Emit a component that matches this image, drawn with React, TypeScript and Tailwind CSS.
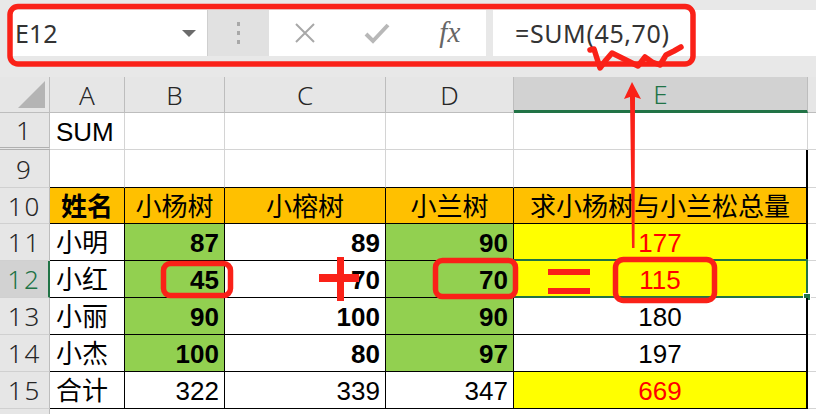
import React from 'react'

// --- Excel style demo: SUM(45,70) ---
type Cell = {
  v?: string
  bg?: string
  align?: 'l' | 'c' | 'r'
  bold?: boolean
  red?: boolean
}

const G = 'bg-[#92d050]'
const Y = 'bg-[#ffff00]'
const O = 'bg-[#ffc000]'

const rows: { no: string; h: string; table: boolean; cells: Cell[] }[] = [
  { no: '1', h: 'h-[37px]', table: false, cells: [{ v: 'SUM', align: 'l' }, {}, {}, {}, {}] },
  { no: '9', h: 'h-[38px]', table: false, cells: [{}, {}, {}, {}, {}] },
  {
    no: '10', h: 'h-[36px]', table: true,
    cells: [
      { v: '姓名', bg: O, align: 'c', bold: true },
      { v: '小杨树', bg: O, align: 'c' },
      { v: '小榕树', bg: O, align: 'c' },
      { v: '小兰树', bg: O, align: 'c' },
      { v: '求小杨树与小兰松总量', bg: O, align: 'c' },
    ],
  },
  {
    no: '11', h: 'h-[37px]', table: true,
    cells: [
      { v: '小明', align: 'l' },
      { v: '87', bg: G, align: 'r', bold: true },
      { v: '89', align: 'r', bold: true },
      { v: '90', bg: G, align: 'r', bold: true },
      { v: '177', bg: Y, align: 'c', red: true },
    ],
  },
  {
    no: '12', h: 'h-[37px]', table: true,
    cells: [
      { v: '小红', align: 'l' },
      { v: '45', bg: G, align: 'r', bold: true },
      { v: '70', align: 'r', bold: true },
      { v: '70', bg: G, align: 'r', bold: true },
      { v: '115', bg: Y, align: 'c', red: true },
    ],
  },
  {
    no: '13', h: 'h-[37px]', table: true,
    cells: [
      { v: '小丽', align: 'l' },
      { v: '90', bg: G, align: 'r', bold: true },
      { v: '100', align: 'r', bold: true },
      { v: '90', bg: G, align: 'r', bold: true },
      { v: '180', align: 'c' },
    ],
  },
  {
    no: '14', h: 'h-[37px]', table: true,
    cells: [
      { v: '小杰', align: 'l' },
      { v: '100', bg: G, align: 'r', bold: true },
      { v: '80', align: 'r', bold: true },
      { v: '97', bg: G, align: 'r', bold: true },
      { v: '197', align: 'c' },
    ],
  },
  {
    no: '15', h: 'h-[37px]', table: true,
    cells: [
      { v: '合计', align: 'l' },
      { v: '322', align: 'r' },
      { v: '339', align: 'r' },
      { v: '347', align: 'r' },
      { v: '669', bg: Y, align: 'c', red: true },
    ],
  },
]

const widths = ['w-[75px]', 'w-[100px]', 'w-[161px]', 'w-[128px]', 'w-[294px]']
const letters = ['A', 'B', 'C', 'D', 'E']

function SheetRow({ r }: { r: (typeof rows)[number] }) {
  const sel = r.no === '12'
  return (
    <div className={`flex ${r.h}`}>
      {/* row header */}
      <div
        className={`w-[50px] shrink-0 flex items-center justify-center tracking-[2px] font-['Noto_Sans',sans-serif] font-light ${
          sel
            ? 'bg-[#d2d2d2] text-[#217346] border-r-2 border-r-[#217346]'
            : 'bg-[#e6e6e6] text-[#262626] border-r border-r-[#bdbdbd]'
        } ${r.no === '1' ? 'border-b-[3px] border-double border-b-[#b0b0b0]' : 'border-b border-b-[#d0d0d0]'}`}
      >
        {r.no}
      </div>
      {r.cells.map((c, i) => {
        const last = i === 4
        const line = r.table
          ? `border-b border-b-black ${last ? 'border-r-2' : 'border-r'} border-r-black`
          : `${r.no === '9' ? 'border-b border-b-black' : 'border-b border-b-[#d4d4d4]'} ${
              last && r.no === '9' ? 'border-r-2 border-r-black' : 'border-r border-r-[#d4d4d4]'
            }`
        const just = c.align === 'l' ? 'justify-start pl-[6px]' : c.align === 'r' ? 'justify-end pr-[5px]' : 'justify-center'
        return (
          <div
            key={i}
            className={`${widths[i]} shrink-0 relative flex items-center pt-[2px] ${just} ${c.bg ?? 'bg-white'} ${line} ${
              c.bold ? 'font-bold' : ''
            } ${c.red ? 'text-[#ff0000]' : 'text-black'}`}
          >
            {c.v}
            {sel && last && (
              <div className="absolute -left-px -top-[2px] -right-[2px] -bottom-px border-2 border-[#217346]">
                <div className="absolute -right-[5px] -bottom-[5px] w-[8px] h-[8px] bg-[#217346] border border-white" />
              </div>
            )}
          </div>
        )
      })}
      <div className="flex-1 bg-white border-b border-b-[#d4d4d4]" />
    </div>
  )
}

export default function App() {
  return (
    <div className="relative w-[816px] h-[414px] overflow-hidden bg-white font-['Liberation_Sans','Noto_Sans_CJK_SC',sans-serif] text-[26px] leading-none">
      {/* --- FORMULA BAR --- */}
      <div className="h-[77px] bg-[#e8e8e8] flex items-start pt-[10px] pl-[12px]">
        <div className="w-[196px] h-[46px] bg-white border-r border-[#cfcfcf] flex items-center justify-between pl-[3px] pr-[11px] font-['Noto_Sans',sans-serif] text-[25px] text-[#333]">
          <span>E12</span>
          <svg width="14" height="7" viewBox="0 0 14 7">
            <path d="M0 0 L14 0 L7 7 Z" fill="#6b6b6b" />
          </svg>
        </div>
        <div className="w-[61px] h-[46px] bg-[#e1e1e1] flex flex-col items-center justify-center gap-[5px]">
          <span className="w-[3px] h-[4px] bg-[#a8a8a8]" />
          <span className="w-[3px] h-[4px] bg-[#a8a8a8]" />
          <span className="w-[3px] h-[4px] bg-[#a8a8a8]" />
        </div>
        <div className="w-[217px] h-[46px] bg-white grid grid-cols-3 items-center justify-items-center">
          <svg width="22" height="22" viewBox="0 0 22 22">
            <path d="M2 2 L20 20 M20 2 L2 20" stroke="#a8a8a8" strokeWidth="2" />
          </svg>
          <svg width="26" height="22" viewBox="0 0 26 22">
            <path d="M2 12 L9 19 L24 3" stroke="#b8b8b8" strokeWidth="4" fill="none" />
          </svg>
          <span className="font-['Liberation_Serif',serif] italic text-[29px] text-[#666] -mt-[2px]">fx</span>
        </div>
        <div className="ml-[7px] flex-1 h-[46px] bg-white flex items-center pl-[22px] font-['Noto_Sans',sans-serif] text-[25px] text-[#333] tracking-[0.6px]">
          =SUM(45,70)
        </div>
      </div>

      {/* --- COLUMN HEADERS --- */}
      <div className="flex h-[36px] text-[#262626] font-['Noto_Sans',sans-serif] font-light">
        <div className="w-[50px] shrink-0 bg-[#e6e6e6] border-r border-b border-[#bdbdbd] relative">
          <svg className="absolute right-[4px] bottom-[4px]" width="27" height="27" viewBox="0 0 27 27">
            <path d="M27 0 L27 27 L0 27 Z" fill="#b4b4b4" />
          </svg>
        </div>
        {letters.map((l, i) =>
          l === 'E' ? (
            <div key={l} className={`${widths[i]} shrink-0 bg-[#d2d2d2] text-[#217346] border-b-[3px] border-b-[#217346] border-r border-r-[#bdbdbd] flex items-center justify-center`}>
              {l}
            </div>
          ) : (
            <div key={l} className={`${widths[i]} shrink-0 bg-[#e6e6e6] border-r border-b border-[#bdbdbd] flex items-center justify-center`}>
              {l}
            </div>
          )
        )}
        <div className="flex-1 bg-[#e6e6e6] border-b border-[#bdbdbd]" />
      </div>

      {/* --- ROWS --- */}
      {rows.map((r) => (
        <SheetRow key={r.no} r={r} />
      ))}
      <div className="flex h-[10px]">
        <div className="w-[50px] bg-[#e6e6e6] border-r border-[#bdbdbd]" />
        <div className="flex-1 bg-white" />
      </div>

      {/* --- RED ANNOTATIONS --- */}
      <svg className="absolute inset-0 pointer-events-none" width="816" height="414" viewBox="0 0 816 414">
        <g fill="none" stroke="#fa2118" strokeWidth="5.5" strokeLinejoin="round" strokeLinecap="round">
          <rect x="10" y="6.5" width="683" height="57.5" rx="8" />
          <path d="M590 50 L594 49 L600 68 L606 60 L612 53 L620 57 L630 62 L638 66 L645 57 L652 62 L660 65 L666 55 L674 51 L681 47" />
          <rect x="163.5" y="263.5" width="67" height="32" rx="7" />
          <rect x="435.5" y="260.5" width="80" height="36" rx="7" />
          <rect x="615.5" y="259.5" width="99" height="41" rx="8" />
        </g>
        <g fill="#fa2118">
          <rect x="319" y="274" width="40" height="8" />
          <rect x="337" y="257" width="7" height="44" />
          <rect x="548" y="269" width="42" height="6" />
          <rect x="548" y="288" width="42" height="6" />
          <polygon points="632,82 641,99 635,97 634.5,248 632,248 630,97 624,99" />
        </g>
      </svg>
    </div>
  )
}
